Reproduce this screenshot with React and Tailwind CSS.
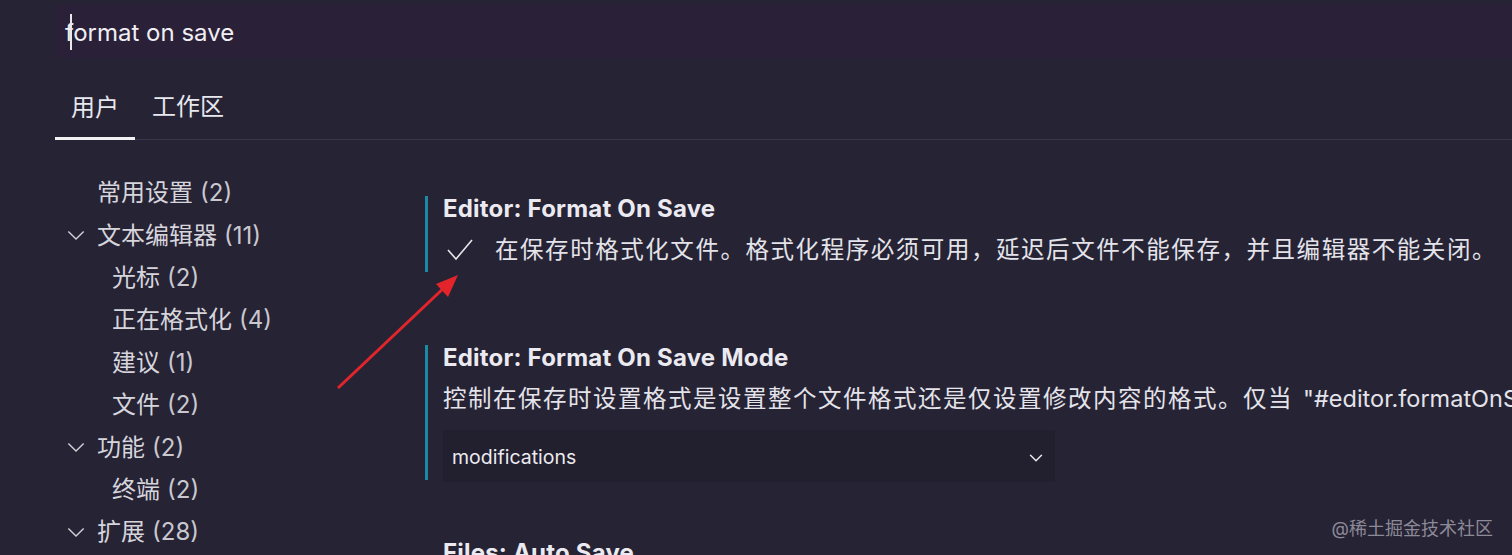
import { ChevronDown } from "lucide-react";

const font = { fontFamily: 'Inter, "Noto Sans CJK SC", sans-serif' };

const tree = [
  { label: "常用设置", count: 2, level: 0, open: false, arrow: false },
  { label: "文本编辑器", count: 11, level: 0, arrow: true },
  { label: "光标", count: 2, level: 1 },
  { label: "正在格式化", count: 4, level: 1 },
  { label: "建议", count: 1, level: 1 },
  { label: "文件", count: 2, level: 1 },
  { label: "功能", count: 2, level: 0, arrow: true },
  { label: "终端", count: 2, level: 1 },
  { label: "扩展", count: 28, level: 0, arrow: true },
];

const Chevron = ({ className }) => (
  <svg viewBox="0 0 20 12" className={className} fill="none" stroke="currentColor" strokeWidth="1.6">
    <path d="M1.5 1.5 L10 10 L18.5 1.5" />
  </svg>
);

export default function App() {
  return (
    <div
      className="relative w-[1512px] h-[555px] overflow-hidden bg-[#262335] text-[#e4e3ea]"
      style={font}
    >
      {/* search */}
      <div className="h-[5px]" />
      <div className="ml-[55px] h-[53px] bg-[#2a2139] flex items-center pl-[10px]">
        <span className="relative text-[24px] text-[#f0eff4] leading-none pt-[2px]">
          <span className="absolute left-[5px] -top-[5px] w-[1.5px] h-[36px] bg-[#e8e8e8]" />
          format on save
        </span>
      </div>

      {/* tabs */}
      <div className="ml-[55px] h-[82px] flex items-end border-b border-[#3a3649]">
        <div className="w-[80px] h-full flex items-center justify-center text-[24px] text-[#e8e8ee] border-b-[3px] border-[#f2f2f2] -mb-[1px] pt-[20px]">
          用户
        </div>
        <div className="h-full flex items-center pl-[17px] text-[24px] text-[#e8e8ee] pt-[17px]">
          工作区
        </div>
      </div>

      <div className="flex">
        {/* left tree */}
        <div className="w-[425px] shrink-0 pt-[32px]">
          {tree.map((t, i) => (
            <div
              key={i}
              className={`h-[42.4px] flex items-center text-[24px] text-[#d6d5dc] ${t.level === 1 ? "pl-[112px]" : "pl-[97px]"}`}
            >
              {t.arrow && (
                <Chevron className="absolute left-[67px] w-[18px] h-[11px] text-[#cfcfd6]" />
              )}
              <span>{t.label}</span>
              <span className="ml-[7px] text-[#c9c8cf]">({t.count})</span>
            </div>
          ))}
        </div>

        {/* settings */}
        <div className="flex-1 min-w-0 pt-[56px]">
          <div className="border-l-[3px] border-[#1d8aa5] pl-[15px] h-[76px]">
            <div className="text-[24px] font-bold tracking-[0.2px] leading-[26px] text-[#ebeaf0]">
              Editor: Format On Save
            </div>
            <div className="flex items-center mt-[13px] h-[30px] whitespace-nowrap">
              <svg viewBox="0 0 26 22" className="w-[26px] h-[22px] ml-[4px] text-[#e6e6ea]" fill="none" stroke="currentColor" strokeWidth="1.6">
                <path d="M1 11 L9 20 L25 1" />
              </svg>
              <span className="ml-[22px] text-[23.5px] tracking-[1.55px]">
                在保存时格式化文件。格式化程序必须可用，延迟后文件不能保存，并且编辑器不能关闭。
              </span>
            </div>
          </div>

          <div className="mt-[75px] border-l-[3px] border-[#1d8aa5] pl-[15px] h-[135px]">
            <div className="text-[24px] font-bold tracking-[0.2px] leading-[26px] -mt-[2px] text-[#ebeaf0]">
              Editor: Format On Save Mode
            </div>
            <div className="mt-[13px] h-[30px] flex items-center whitespace-nowrap overflow-hidden text-[23.5px]">
              <span className="tracking-[1.5px]">控制在保存时设置格式是设置整个文件格式还是仅设置修改内容的格式。仅当</span>
              <span className="ml-[10px]">"#editor.formatOnSave#" 启用时可用。</span>
            </div>
            <div className="mt-[16px] w-[612px] h-[52px] bg-[#221f2e] flex items-center justify-between pl-[9px] pr-[8px] pt-[4px]">
              <span className="text-[19.5px] text-[#ecebf0]">modifications</span>
              <ChevronDown className="w-[22px] h-[22px] text-[#e8e8ee]" strokeWidth={1.6} />
            </div>
          </div>

          <div className="mt-[60px] pl-[18px] text-[24px] font-bold tracking-[0.2px] leading-[26px] text-[#ebeaf0]">
            Files: Auto Save
          </div>
        </div>
      </div>

      {/* annotation arrow */}
      <svg className="absolute left-0 top-0 pointer-events-none" width="1512" height="555">
        <line x1="338" y1="388" x2="447" y2="285" stroke="#e3252b" strokeWidth="3" />
        <path d="M458 275 L436 284 L448 297 Z" fill="#e3252b" />
      </svg>

      {/* watermark */}
      <div className="absolute right-[19px] bottom-[13px] text-[18px] text-[#8d8a98]">
        @稀土掘金技术社区
      </div>
    </div>
  );
}
